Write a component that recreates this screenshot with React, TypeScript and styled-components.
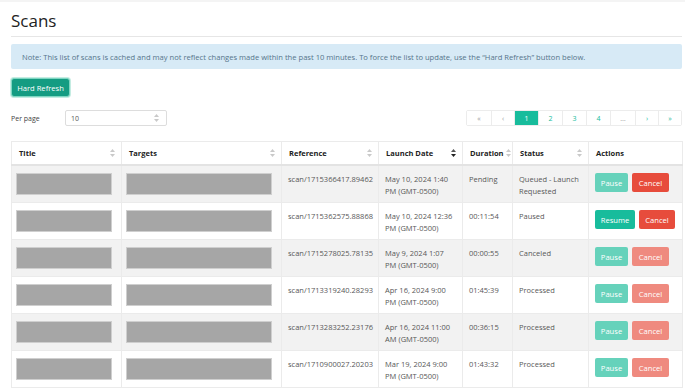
import styled, { createGlobalStyle } from "styled-components";

interface Scan {
  reference: string;
  launch: [string, string];
  duration: string;
  status: string;
  state: "queued" | "paused" | "done";
}

const scans: Scan[] = [
  {
    reference: "scan/1715366417.89462",
    launch: ["May 10, 2024 1:40", "PM (GMT-0500)"],
    duration: "Pending",
    status: "Queued - Launch Requested",
    state: "queued",
  },
  {
    reference: "scan/1715362575.88868",
    launch: ["May 10, 2024 12:36", "PM (GMT-0500)"],
    duration: "00:11:54",
    status: "Paused",
    state: "paused",
  },
  {
    reference: "scan/1715278025.78135",
    launch: ["May 9, 2024 1:07", "PM (GMT-0500)"],
    duration: "00:00:55",
    status: "Canceled",
    state: "done",
  },
  {
    reference: "scan/1713319240.28293",
    launch: ["Apr 16, 2024 9:00", "PM (GMT-0500)"],
    duration: "01:45:39",
    status: "Processed",
    state: "done",
  },
  {
    reference: "scan/1713283252.23176",
    launch: ["Apr 16, 2024 11:00", "AM (GMT-0500)"],
    duration: "00:36:15",
    status: "Processed",
    state: "done",
  },
  {
    reference: "scan/1710900027.20203",
    launch: ["Mar 19, 2024 9:00", "PM (GMT-0500)"],
    duration: "01:43:32",
    status: "Processed",
    state: "done",
  },
];

const columns = [
  { label: "Title", width: 110, sort: "none" },
  { label: "Targets", width: 160, sort: "none" },
  { label: "Reference", width: 97, sort: "none" },
  { label: "Launch Date", width: 84, sort: "desc" },
  { label: "Duration", width: 50, sort: "none" },
  { label: "Status", width: 76, sort: "none" },
  { label: "Actions", width: 94, sort: "" },
];

const GlobalStyle = createGlobalStyle`
  html, body {
    margin: 0;
    overflow: hidden;
    background: #fff;
    font-family: "Open Sans", "Noto Sans", sans-serif;
    color: #585858;
  }
`;

const Page = styled.div`
  border-top: 2px solid #f4f4f4;
  padding: 0 3px 0 11px;
`;

const Heading = styled.h1`
  margin: 7px 0 0;
  font-size: 17px;
  line-height: 23px;
  font-weight: 500;
  color: #222;
`;

const Rule = styled.hr`
  margin: 4px 0 0;
  border: 0;
  border-top: 1px solid #e6e6e6;
`;

const Alert = styled.div`
  margin-top: 7px;
  height: 25px;
  display: flex;
  align-items: center;
  padding: 0 11px;
  background: #d7eaf6;
  color: #56758b;
  border-radius: 2px;
  font-size: 7.6px;
  white-space: nowrap;
`;

const RefreshButton = styled.button`
  margin-top: 9px;
  height: 19px;
  width: 59px;
  padding: 0;
  border: 1px solid #7fd6c2;
  border-radius: 3px;
  background: #149c82;
  color: #fff;
  font-family: inherit;
  font-size: 7.6px;
  box-shadow: 0 0 0 1px #c4ece2;
`;

const Toolbar = styled.div`
  margin-top: 13px;
  height: 16px;
  display: flex;
  align-items: center;
  justify-content: space-between;
`;

const PerPage = styled.div`
  display: flex;
  align-items: center;
  font-size: 7px;
  color: #444;
`;

const PerPageLabel = styled.span`
  width: 54px;
`;

const Select = styled.div`
  width: 102px;
  height: 16px;
  box-sizing: border-box;
  border: 1px solid #ddd;
  border-radius: 2px;
  display: flex;
  align-items: center;
  justify-content: space-between;
  padding: 0 7px 0 5px;
  color: #555;
`;

const Pager = styled.div`
  display: flex;
  height: 16px;
  box-sizing: border-box;
  border: 1px solid #ececec;
  border-radius: 2px;
`;

const PageItem = styled.span<{ $w: number; $active?: boolean; $muted?: boolean }>`
  width: ${(p) => p.$w}px;
  box-sizing: border-box;
  display: flex;
  align-items: center;
  justify-content: center;
  font-size: 7px;
  border-left: 1px solid #ececec;
  background: ${(p) => (p.$active ? "#18bc9c" : "#fff")};
  color: ${(p) => (p.$active ? "#fff" : p.$muted ? "#9a9a9a" : "#18bc9c")};
  &:first-child {
    border-left: 0;
  }
`;

const Table = styled.table`
  margin-top: 15px;
  width: 671px;
  border-collapse: collapse;
  table-layout: fixed;
  font-size: 7.5px;
`;

const Th = styled.th`
  height: 22px;
  padding: 0 6px 0 7px;
  text-align: left;
  color: #222;
  font-weight: 700;
  border: 1px solid #ebebeb;
  border-bottom: 2px solid #e3e3e3;
`;

const ThInner = styled.div`
  display: flex;
  align-items: center;
  justify-content: space-between;
  gap: 2px;
`;

const Row = styled.tr<{ $striped: boolean }>`
  background: ${(p) => (p.$striped ? "#f2f2f2" : "#fff")};
`;

const Td = styled.td`
  height: 35.3px;
  box-sizing: border-box;
  padding: 7px 6px 5px;
  vertical-align: top;
  line-height: 12px;
  border-left: 1px solid #ebebeb;
  border-right: 1px solid #ebebeb;
  border-bottom: 1px solid #ebebeb;
`;

const RedactCell = styled(Td)`
  padding: 7px 4px 0;
`;

const Redacted = styled.div<{ $w: number }>`
  width: ${(p) => p.$w}px;
  height: 22px;
  background: #a6a6a6;
  border: 1px solid #cfcfcf;
  box-sizing: border-box;
`;

const Actions = styled.div`
  display: flex;
  gap: 4px;
`;

const ActionButton = styled.button<{ $tone: "teal" | "red"; $disabled?: boolean; $w: number }>`
  width: ${(p) => p.$w}px;
  height: 19px;
  padding: 0;
  border: 0;
  border-radius: 2px;
  font-family: inherit;
  font-size: 7.6px;
  color: #fff;
  background: ${(p) =>
    p.$tone === "teal"
      ? p.$disabled
        ? "#66d2bb"
        : "#18bc9c"
      : p.$disabled
        ? "#ef8a7f"
        : "#e74c3c"};
`;

const TailRow = styled.tr`
  height: 10px;
  background: #f2f2f2;
`;

const SortIcon = ({ sort }: { sort: string }) => {
  if (!sort) return null;
  const up = sort === "desc" ? "#555" : "#c9c9c9";
  const down = sort === "desc" ? "#222" : "#c9c9c9";
  return (
    <svg width="5" height="8" viewBox="0 0 5 8" style={{ flexShrink: 0 }}>
      <path d="M2.5 0 L5 3 L0 3 Z" fill={up} />
      <path d="M0 5 L5 5 L2.5 8 Z" fill={down} />
    </svg>
  );
};

export default () => {
  return (
    <Page>
      <GlobalStyle />
      <Heading>Scans</Heading>
      <Rule />
      <Alert>
        Note: This list of scans is cached and may not reflect changes made within the past 10
        minutes. To force the list to update, use the “Hard Refresh” button below.
      </Alert>
      <RefreshButton>Hard Refresh</RefreshButton>
      <Toolbar>
        <PerPage>
          <PerPageLabel>Per page</PerPageLabel>
          <Select>
            <span>10</span>
            <SortIcon sort="select" />
          </Select>
        </PerPage>
        <Pager>
          <PageItem $w={24} $muted>«</PageItem>
          <PageItem $w={23} $muted>‹</PageItem>
          <PageItem $w={24} $active>1</PageItem>
          <PageItem $w={24}>2</PageItem>
          <PageItem $w={24}>3</PageItem>
          <PageItem $w={24}>4</PageItem>
          <PageItem $w={25} $muted>…</PageItem>
          <PageItem $w={23}>›</PageItem>
          <PageItem $w={23}>»</PageItem>
        </Pager>
      </Toolbar>
      <Table>
        <colgroup>
          {columns.map((c) => (
            <col key={c.label} style={{ width: c.width }} />
          ))}
        </colgroup>
        <thead>
          <tr>
            {columns.map((c) => (
              <Th key={c.label}>
                <ThInner>
                  <span>{c.label}</span>
                  <SortIcon sort={c.sort} />
                </ThInner>
              </Th>
            ))}
          </tr>
        </thead>
        <tbody>
          {scans.map((s, i) => (
            <Row key={s.reference} $striped={i % 2 === 0}>
              <RedactCell>
                <Redacted $w={96} />
              </RedactCell>
              <RedactCell>
                <Redacted $w={146} />
              </RedactCell>
              <Td>{s.reference}</Td>
              <Td>
                {s.launch[0]}
                <br />
                {s.launch[1]}
              </Td>
              <Td>{s.duration}</Td>
              <Td>{s.status}</Td>
              <Td>
                <Actions>
                  {s.state === "paused" ? (
                    <ActionButton $tone="teal" $w={40}>Resume</ActionButton>
                  ) : (
                    <ActionButton $tone="teal" $w={33} $disabled>Pause</ActionButton>
                  )}
                  <ActionButton
                    $tone="red"
                    $w={s.state === "paused" ? 36 : 37}
                    $disabled={s.state === "done"}
                  >
                    Cancel
                  </ActionButton>
                </Actions>
              </Td>
            </Row>
          ))}
          <TailRow>
            {columns.map((c) => (
              <Td key={c.label} />
            ))}
          </TailRow>
        </tbody>
      </Table>
    </Page>
  );
};
